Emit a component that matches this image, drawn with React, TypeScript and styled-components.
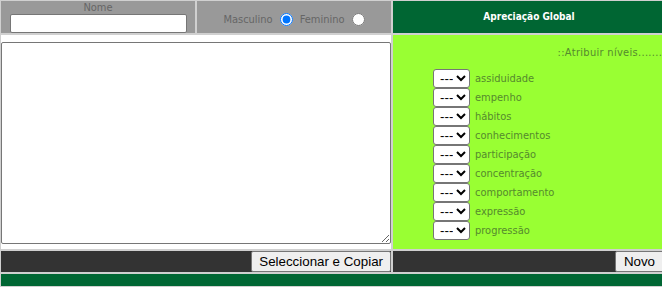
import React from "react";
import styled, { createGlobalStyle } from "styled-components";

const GlobalStyle = createGlobalStyle`
  html, body {
    margin: 0;
    padding: 0;
    overflow: hidden;
    background: #d0d0d0;
  }
`;

const LEVELS = [
  "assiduidade",
  "empenho",
  "hábitos",
  "conhecimentos",
  "participação",
  "concentração",
  "comportamento",
  "expressão",
  "progressão"
];

const Frame = styled.div`
  width: 666px;
  box-sizing: border-box;
  padding: 1px;
  display: grid;
  grid-template-columns: 194px 194px 272px;
  grid-template-rows: 32px 214px 21px 12px;
  gap: 2px;
  background: #d0d0d0;
  font-family: "DejaVu Sans Condensed", "DejaVu Sans", Tahoma, sans-serif;
  font-size: 11px;
`;

const GrayCell = styled.div`
  background: #999999;
  color: #666666;
`;

const NameCell = styled(GrayCell)`
  display: flex;
  flex-direction: column;
  align-items: center;
  padding-top: 1px;
`;

const FieldLabel = styled.span`
  line-height: 12px;
`;

const NameInput = styled.input`
  width: 177px;
  height: 20px;
  margin: 0 0 0 1px;
  box-sizing: border-box;
  border: 1px solid #767676;
  border-radius: 2px;
  background: #fff;
  padding: 1px 2px;
`;

const GenderCell = styled(GrayCell)`
  display: flex;
  justify-content: center;
  align-items: flex-end;
  padding-bottom: 7px;
  box-sizing: border-box;
`;

const GenderOption = styled.label`
  display: inline-flex;
  align-items: flex-end;
  line-height: 12px;
`;

const Radio = styled.input`
  width: 13px;
  height: 13px;
  margin: 0 ${(p: { $last?: boolean }) => (p.$last ? "0" : "7px")} 0 7px;
  accent-color: #0075ff;
`;

const HeaderCell = styled.div`
  background: #006633;
  color: #ffffff;
  font-weight: bold;
  font-size: 10px;
  display: flex;
  align-items: center;
  justify-content: center;
  padding-bottom: 1px;
`;

const NotesCell = styled.div`
  background: #ffffff;
  grid-column: 1 / 3;
  padding: 7px 0 5px;
  box-sizing: border-box;
  display: flex;
`;

const Notes = styled.textarea`
  flex: 1;
  margin: 0;
  box-sizing: border-box;
  border: 1px solid #767676;
  border-radius: 2px;
  resize: both;
  font-family: "Liberation Mono", monospace;
  font-size: 13px;
`;

const LevelsCell = styled.div`
  background: #99ff33;
  color: #558a2e;
  overflow: hidden;
`;

const Hint = styled.div`
  white-space: nowrap;
  text-align: right;
  padding: 11px 0 0;
  margin-right: -4px;
  line-height: 13px;
  letter-spacing: 0.3px;
`;

const LevelList = styled.div`
  display: flex;
  flex-direction: column;
  padding: 10px 0 0 40px;
`;

const LevelRow = styled.label`
  display: flex;
  align-items: center;
  height: 19px;
  gap: 5px;
`;

const LevelSelect = styled.select`
  width: 37px;
  height: 19px;
  margin: 0;
  padding: 0 0 0 2px;
  box-sizing: border-box;
  font-family: "Liberation Sans", Arial, sans-serif;
  font-size: 13.33px;
  color: #000;
  background: #fff;
  border: 1px solid #767676;
  border-radius: 3px;
`;

const ActionCell = styled.div`
  background: #333333;
  display: flex;
  justify-content: flex-end;
  grid-column: ${(p: { $wide?: boolean }) => (p.$wide ? "1 / 3" : "auto")};
`;

const ActionButton = styled.button`
  font-family: "Liberation Sans", Arial, sans-serif;
  font-size: 13.33px;
  color: #000;
  background: #efefef;
  border: 1px solid #767676;
  border-radius: 2px;
  padding: 0 7px;
  margin: 0;
  height: 21px;
`;

const NewButton = styled(ActionButton)`
  padding: 0 8px;
  margin-right: 1px;
`;

const FooterBar = styled.div`
  grid-column: 1 / -1;
  background: #006633;
`;

export default function App() {
  return (
    <>
      <GlobalStyle />
      <Frame>
        <NameCell>
          <FieldLabel>Nome</FieldLabel>
          <NameInput type="text" />
        </NameCell>
        <GenderCell>
          <GenderOption>
            Masculino
            <Radio type="radio" name="sexo" defaultChecked />
          </GenderOption>
          <GenderOption>
            Feminino
            <Radio type="radio" name="sexo" $last />
          </GenderOption>
        </GenderCell>
        <HeaderCell>Apreciação Global</HeaderCell>

        <NotesCell>
          <Notes />
        </NotesCell>
        <LevelsCell>
          <Hint>::Atribuir níveis.........</Hint>
          <LevelList>
            {LEVELS.map(level => (
              <LevelRow key={level}>
                <LevelSelect defaultValue="">
                  <option value="">---</option>
                  <option value="1">1</option>
                  <option value="2">2</option>
                  <option value="3">3</option>
                  <option value="4">4</option>
                  <option value="5">5</option>
                </LevelSelect>
                {level}
              </LevelRow>
            ))}
          </LevelList>
        </LevelsCell>

        <ActionCell $wide>
          <ActionButton>Seleccionar e Copiar</ActionButton>
        </ActionCell>
        <ActionCell>
          <NewButton>Novo</NewButton>
        </ActionCell>

        <FooterBar />
      </Frame>
    </>
  );
}
